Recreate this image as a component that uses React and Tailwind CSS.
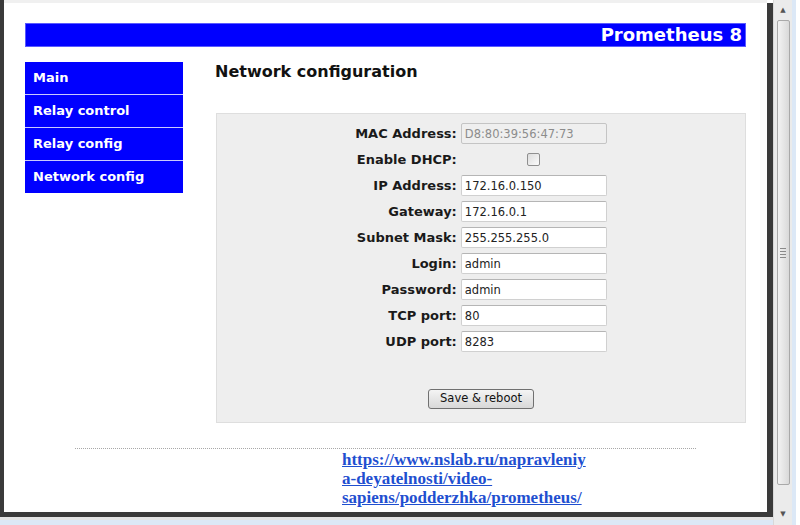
import React from "react";

const fields = [
  { label: "MAC Address:", value: "D8:80:39:56:47:73", disabled: true },
  { label: "Enable DHCP:", checkbox: true },
  { label: "IP Address:", value: "172.16.0.150" },
  { label: "Gateway:", value: "172.16.0.1" },
  { label: "Subnet Mask:", value: "255.255.255.0" },
  { label: "Login:", value: "admin" },
  { label: "Password:", value: "admin" },
  { label: "TCP port:", value: "80" },
  { label: "UDP port:", value: "8283" },
];

const menu = ["Main", "Relay control", "Relay config", "Network config"];

const Scrollbar = () => (
  <div className="w-[19px] h-full flex flex-col items-center bg-[#ebebeb] border-l border-[#d8d8d8]">
    <div className="h-[20px] flex items-center justify-center text-[7px] text-[#555]">▲</div>
    <div className="w-[13px] h-[465px] rounded-[2px] border border-[#a9a9a9] bg-gradient-to-r from-[#f3f3f3] to-[#d9d9d9] flex items-center justify-center">
      <div className="flex flex-col gap-[2px]">
        <div className="w-[6px] h-px bg-[#8a8a8a]" />
        <div className="w-[6px] h-px bg-[#8a8a8a]" />
        <div className="w-[6px] h-px bg-[#8a8a8a]" />
        <div className="w-[6px] h-px bg-[#8a8a8a]" />
      </div>
    </div>
    <div className="flex-1" />
    <div className="h-[22px] flex items-center justify-center text-[7px] text-[#555]">▼</div>
  </div>
);

const Field = ({ field }) => {
  if (field.checkbox) {
    return (
      <div className="h-[21px] flex items-center justify-center">
        <span className="w-[13px] h-[13px] rounded-[2px] border border-[#8f8f8f] bg-gradient-to-br from-[#dcdcdc] to-[#fbfbfb]" />
      </div>
    );
  }
  return (
    <input
      readOnly
      disabled={field.disabled}
      value={field.value}
      className={
        field.disabled
          ? "w-[146px] h-[21px] px-[3px] rounded-[2px] border border-[#c4c4c4] bg-[#efefef] text-[#8c8c8c] text-[11.5px] outline-none"
          : "w-[146px] h-[21px] px-[3px] rounded-[2px] border border-[#d0d0d0] border-t-[#b5b5b5] bg-white text-[#222] text-[11.5px] outline-none"
      }
    />
  );
};

export default function App() {
  return (
    <div className="w-[800px] h-[525px] flex overflow-hidden bg-white font-['DejaVu_Sans',sans-serif]">
      <div className="w-[773px] h-full flex flex-col">
        <div className="flex-1 min-h-0 flex">
          <div className="w-[4px] bg-[#3a3a3a]" />
          <div className="flex-1 min-h-0 flex flex-col">
            <div className="h-[3px] bg-[#f0f0f0]" />
            <div className="flex-1 min-h-0 overflow-hidden bg-white px-[21px] pt-[20px]">
              {/* header bar */}
              <div className="h-[24px] bg-[#0000ff] border border-[#5a5aff] flex items-center justify-end pr-[3px]">
                <span className="text-white font-bold text-[18px] leading-none">Prometheus 8</span>
              </div>

              <div className="flex mt-[15px]">
                {/* left menu */}
                <div className="w-[158px] flex flex-col gap-px bg-[#c9c9ff] self-start">
                  {menu.map((item) => (
                    <div
                      key={item}
                      className="h-[32px] bg-[#0000ff] flex items-center pl-[8px] text-white font-bold text-[13px]"
                    >
                      {item}
                    </div>
                  ))}
                </div>

                {/* content */}
                <div className="flex-1 ml-[32px]">
                  <h1 className="text-[16px] leading-[20px] font-bold text-[#111]">Network configuration</h1>

                  <div className="mt-[31px] ml-px border border-[#dedede] bg-[#eeeeee] pt-[9px] pb-[13px]">
                    <div className="grid grid-cols-[auto_146px] gap-x-[4px] gap-y-[5px] justify-center">
                      {fields.map((f) => (
                        <React.Fragment key={f.label}>
                          <div className="h-[21px] flex items-center justify-end font-bold text-[13px] text-[#1a1a1a]">
                            {f.label}
                          </div>
                          <Field field={f} />
                        </React.Fragment>
                      ))}
                    </div>
                    <div className="flex justify-center mt-[37px]">
                      <button className="h-[20px] px-[11px] rounded-[3px] border border-[#707070] bg-gradient-to-b from-[#f4f4f4] to-[#d8d8d8] text-[11.5px] text-[#111] leading-none">
                        Save &amp; reboot
                      </button>
                    </div>
                  </div>
                </div>
              </div>

              {/* footer */}
              <div className="mx-[50px] mt-[25px] border-t border-dotted border-[#a8a8a8]" />
              <div className="ml-[317px] mt-[1px] font-['Liberation_Serif',serif] font-bold text-[17px] leading-[19px]">
                <a href="#" className="text-[#1f4fd0] underline">
                  https://www.nslab.ru/napravleniy
                  <br />
                  a-deyatelnosti/video-
                  <br />
                  sapiens/podderzhka/prometheus/
                </a>
              </div>
            </div>
            <div className="h-[5px] bg-[#3a3a3a]" />
          </div>
          <div className="w-[6px] mt-[3px] bg-[#3a3a3a]" />
        </div>
        <div className="h-[3px] bg-[#e4e4e4]" />
        <div className="h-[5px] bg-[#dce8f6]" />
      </div>
      <Scrollbar />
      <div className="w-[4px] bg-[#dce8f6]" />
      <div className="flex-1 bg-white" />
    </div>
  );
}
